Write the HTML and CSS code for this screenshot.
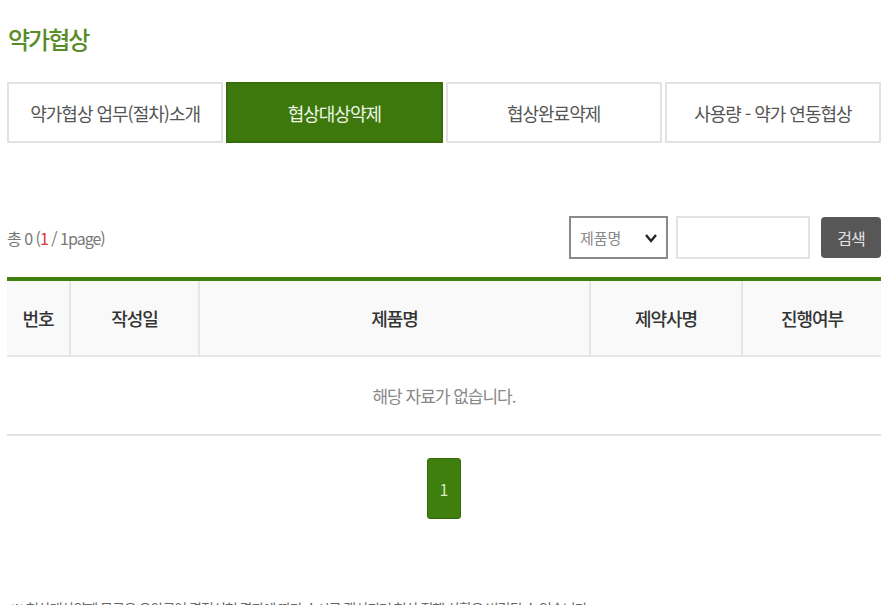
FILE: index.html
```html
<!DOCTYPE html>
<html lang="ko">
<head>
    <meta charset="UTF-8">
    <title>약가협상</title>
    <meta name="viewport" content="width=device-width, initial-scale=1">
    <link rel="stylesheet" href="styles.css">
</head>
<body>
    <div class="page">
        <h1 class="title">약가협상</h1>

        <ul class="tabs">
            <li class="tab">약가협상 업무(절차)소개</li>
            <li class="tab active">협상대상약제</li>
            <li class="tab">협상완료약제</li>
            <li class="tab">사용량 - 약가 연동협상</li>
        </ul>

        <div class="toolbar">
            <p class="count">총 0 (<span class="cur">1</span> / 1page)</p>
            <form class="search">
                <div class="select">
                    <span>제품명</span>
                    <svg class="chev" width="14" height="10" viewBox="0 0 14 10">
                        <path d="M2 2 L7 8 L12 2" fill="none" stroke="#222" stroke-width="2.4"/>
                    </svg>
                </div>
                <input type="text" class="keyword">
                <button type="button" class="btn-search">검색</button>
            </form>
        </div>

        <table class="list">
            <colgroup>
                <col style="width: 63px">
                <col style="width: 129px">
                <col>
                <col style="width: 152px">
                <col style="width: 139px">
            </colgroup>
            <thead>
                <tr>
                    <th>번호</th>
                    <th>작성일</th>
                    <th>제품명</th>
                    <th>제약사명</th>
                    <th>진행여부</th>
                </tr>
            </thead>
            <tbody>
                <tr>
                    <td colspan="5" class="empty">해당 자료가 없습니다.</td>
                </tr>
            </tbody>
        </table>

        <div class="paging">
            <a href="#" class="num on">1</a>
        </div>

        <p class="note">※ 협상대상약제 목록은 요양급여 결정신청 결과에 따라 수시로 갱신되며 협상 진행 상황은 변경될 수 있습니다.</p>
    </div>
</body>
</html>
```

FILE: styles.css
```css
* {
    box-sizing: border-box;
}

body {
    margin: 0;
    background: #fff;
    font-family: "Noto Sans CJK KR", "Noto Sans", sans-serif;
    color: #444;
    overflow: hidden;
}

.page {
    padding: 0 8px 0 7px;
}

.title {
    margin: 0;
    padding: 21px 0 0 1px;
    height: 82px;
    font-size: 24px;
    font-weight: 500;
    line-height: 36px;
    color: #5b8c2a;
    letter-spacing: -2px;
}

.tabs {
    display: grid;
    grid-template-columns: repeat(4, 1fr);
    gap: 3px;
    margin: 0;
    padding: 0;
    list-style: none;
}

.tab {
    height: 61px;
    display: flex;
    align-items: center;
    justify-content: center;
    border: 2px solid #e2e2e2;
    background: #fff;
    font-size: 18px;
    color: #555;
    letter-spacing: -1px;
}

.tab.active {
    background: #3d780c;
    border-color: #356b09;
    color: #eef5e6;
}

.toolbar {
    display: flex;
    justify-content: space-between;
    align-items: center;
    margin-top: 73px;
    height: 43px;
}

.count {
    margin: 0;
    font-size: 16px;
    color: #777;
    letter-spacing: -1px;
}

.count .cur {
    color: #d33;
}

.search {
    display: flex;
    align-items: center;
}

.select {
    width: 99px;
    height: 43px;
    border: 2px solid #8a8a8a;
    display: flex;
    align-items: center;
    justify-content: space-between;
    padding: 0 8px 0 9px;
    font-size: 15px;
    color: #888;
}

.keyword {
    width: 134px;
    height: 43px;
    margin-left: 8px;
    border: 2px solid #e2e2e2;
    outline: none;
}

.btn-search {
    width: 60px;
    height: 41px;
    margin-left: 11px;
    border: none;
    border-radius: 4px;
    background: #575757;
    color: #e2e2e2;
    font-family: inherit;
    font-size: 16px;
    letter-spacing: -1px;
}

.list {
    width: 100%;
    margin-top: 18px;
    border-collapse: collapse;
    table-layout: fixed;
    border-top: 4px solid #3f7f0d;
}

.list th {
    height: 77px;
    background: #f9f9f9;
    border-left: 2px solid #e6e6e6;
    border-bottom: 2px solid #e6e6e6;
    font-size: 18px;
    font-weight: 500;
    color: #333;
    letter-spacing: -1px;
}

.list th:first-child {
    border-left: none;
}

.list td {
    height: 79px;
    border-bottom: 2px solid #e3e3e3;
    text-align: center;
}

.list .empty {
    font-size: 17px;
    color: #888;
    letter-spacing: -1px;
}

.paging {
    display: flex;
    justify-content: center;
    margin-top: 22px;
}

.paging .num {
    width: 34px;
    height: 61px;
    display: flex;
    align-items: center;
    justify-content: center;
    border: 1px solid #33690a;
    border-radius: 3px;
    background: #3f7f0d;
    color: #d7eac6;
    font-size: 16px;
    text-decoration: none;
}

.note {
    margin: 79px 0 0 3px;
    font-size: 14px;
    color: #666;
    letter-spacing: -1px;
}
```
